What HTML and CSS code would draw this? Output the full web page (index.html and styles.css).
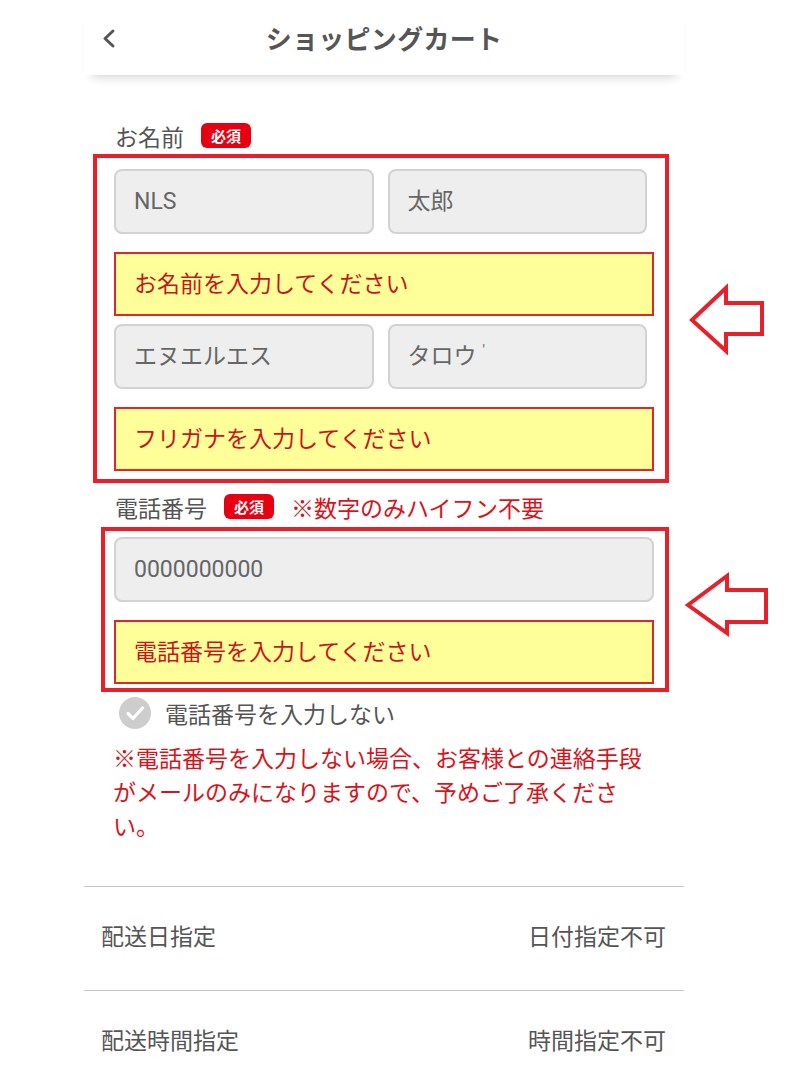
FILE: index.html
```html
<!DOCTYPE html>
<html lang="ja">
  <head>
	<meta http-equiv="Content-Type" content="text/html; charset=UTF-8">
	<title>ショッピングカート</title>
	<meta name="viewport" content="width=device-width, initial-scale=1">
	<link rel="stylesheet" href="styles.css">
  </head>
<body>
	<div class="screen">
	  <div class="page">
		<div class="header">
			<div class="back">
				<svg width="16" height="22" viewBox="0 0 16 22"><path d="M12 3 L4 10.5 L12 18" fill="none" stroke="#555" stroke-width="3" stroke-linecap="round" stroke-linejoin="round"/></svg>
			</div>
			<div class="title">ショッピングカート</div>
			<div></div>
		</div>

		<div class="field-label first">
			<span>お名前</span>
			<span class="badge">必須</span>
		</div>
		<div class="mark-box name-box">
			<div class="name-row">
				<div class="input">NLS</div>
				<div class="input jp">太郎</div>
			</div>
			<div class="error">お名前を入力してください</div>
			<div class="name-row">
				<div class="input jp">エヌエルエス</div>
				<div class="input jp">タロウ<span class="tick">'</span></div>
			</div>
			<div class="error">フリガナを入力してください</div>
		</div>

		<div class="field-label">
			<span>電話番号</span>
			<span class="badge">必須</span>
			<span class="hint">※数字のみハイフン不要</span>
		</div>
		<div class="mark-box tel-box">
			<div class="input">0000000000</div>
			<div class="error">電話番号を入力してください</div>
		</div>

		<div class="check-row">
			<span class="check">
				<svg width="32" height="32" viewBox="0 0 32 32"><circle cx="16" cy="16" r="16" fill="#cdcdcd"/><path d="M9 16.5 L14 21.5 L23.5 11" fill="none" stroke="#fff" stroke-width="3.2" stroke-linecap="round" stroke-linejoin="round"/></svg>
			</span>
			<span>電話番号を入力しない</span>
		</div>
		<p class="note">※電話番号を入力しない場合、お客様との連絡手段がメールのみになりますので、予めご了承ください。</p>

		<div class="row">
			<span>配送日指定</span>
			<span>日付指定不可</span>
		</div>
		<div class="row">
			<span>配送時間指定</span>
			<span>時間指定不可</span>
		</div>
	  </div>

	  <svg class="arrow arrow-name" width="82" height="76" viewBox="0 0 82 76"><polygon points="6,38 40,6 40,21 76,21 76,52 40,52 40,69" fill="none" stroke="#e8202a" stroke-width="4" stroke-linejoin="miter"/></svg>
	  <svg class="arrow arrow-tel" width="90" height="70" viewBox="0 0 90 70"><polygon points="6,35 45,6 45,20 84,20 84,52 45,52 45,63" fill="none" stroke="#e8202a" stroke-width="4" stroke-linejoin="miter"/></svg>
	</div>
</body>
</html>
```

FILE: styles.css
```css
	body {
		margin: 0px;
		padding: 0px;
		background: #fff;
		font-family: Roboto, "Noto Sans CJK JP", sans-serif;
		color: #555;
	}

	.screen {
		position: relative;
		width: 800px;
		min-height: 1079px;
	}

	.page {
		width: 600px;
		margin-left: 84px;
	}

	/* header */

	.header {
		height: 75px;
		display: grid;
		grid-template-columns: 1fr auto 1fr;
		align-items: center;
		box-shadow: 0 10px 10px -8px rgba(0,0,0,.18);
	}
	.back {
		padding-left: 17px;
		display: flex;
		align-items: center;
		padding-top: 2px;
	}
	.title {
		font-size: 26px;
		font-weight: 700;
		color: #555;
		letter-spacing: 0.3px;
	}

	/* form */

	.field-label {
		display: flex;
		align-items: center;
		gap: 17px;
		padding-left: 31px;
		height: 40px;
		padding-top: 4px;
		font-size: 23px;
		color: #555;
	}
	.field-label.first {
		margin-top: 45px;
		height: 32px;
		padding-top: 0;
		margin-bottom: 2px;
	}
	.badge {
		display: inline-flex;
		align-items: center;
		justify-content: center;
		width: 50px;
		height: 25px;
		border-radius: 6px;
		background: #e60012;
		color: #fff;
		font-size: 15px;
		font-weight: 700;
		margin-top: -2px;
	}
	.hint {
		color: #d7141c;
	}

	.mark-box {
		box-sizing: border-box;
		border: 4px solid #e8202a;
	}
	.name-box {
		margin-left: 9px;
		width: 576px;
		padding: 11px 11px 8px 17px;
	}
	.tel-box {
		margin-left: 17px;
		width: 568px;
		padding: 6px 11px 4px 9px;
	}

	.name-row {
		display: grid;
		grid-template-columns: 1fr 1fr;
		gap: 14px;
		margin-right: 7px;
	}

	.input {
		box-sizing: border-box;
		height: 65px;
		margin-bottom: 18px;
		padding-left: 18px;
		display: flex;
		align-items: center;
		background: #eee;
		border: 2px solid #d2d2d2;
		border-radius: 8px;
		font-size: 23px;
		color: #666;
	}
	.input.jp {
		padding-bottom: 5px;
	}
	.tick {
		font-size: 14px;
		margin-left: 6px;
		align-self: flex-start;
		margin-top: 16px;
	}

	.error {
		box-sizing: border-box;
		height: 64px;
		margin-bottom: 8px;
		padding-left: 18px;
		padding-bottom: 5px;
		display: flex;
		align-items: center;
		background: #ffff99;
		border: 2px solid #e0262a;
		font-size: 23px;
		color: #c8161d;
	}
	.error:last-child {
		margin-bottom: 0;
	}

	.check-row {
		display: flex;
		align-items: center;
		gap: 14px;
		height: 32px;
		margin-top: 5px;
		padding-left: 35px;
		font-size: 23px;
		color: #555;
	}
	.check {
		display: flex;
	}

	.note {
		margin: 14px 0 41px 0;
		padding-left: 29px;
		width: 545px;
		font-size: 23px;
		line-height: 34px;
		color: #d7141c;
	}

	/* rows */

	.row {
		box-sizing: border-box;
		height: 104px;
		padding: 0 18px 8px 17px;
		border-top: 1px solid #c8c8c8;
		display: flex;
		justify-content: space-between;
		align-items: center;
		font-size: 23px;
		color: #555;
	}

	/* annotations */

	.arrow {
		position: absolute;
	}
	.arrow-name {
		left: 686px;
		top: 282px;
	}
	.arrow-tel {
		left: 682px;
		top: 570px;
	}
```
